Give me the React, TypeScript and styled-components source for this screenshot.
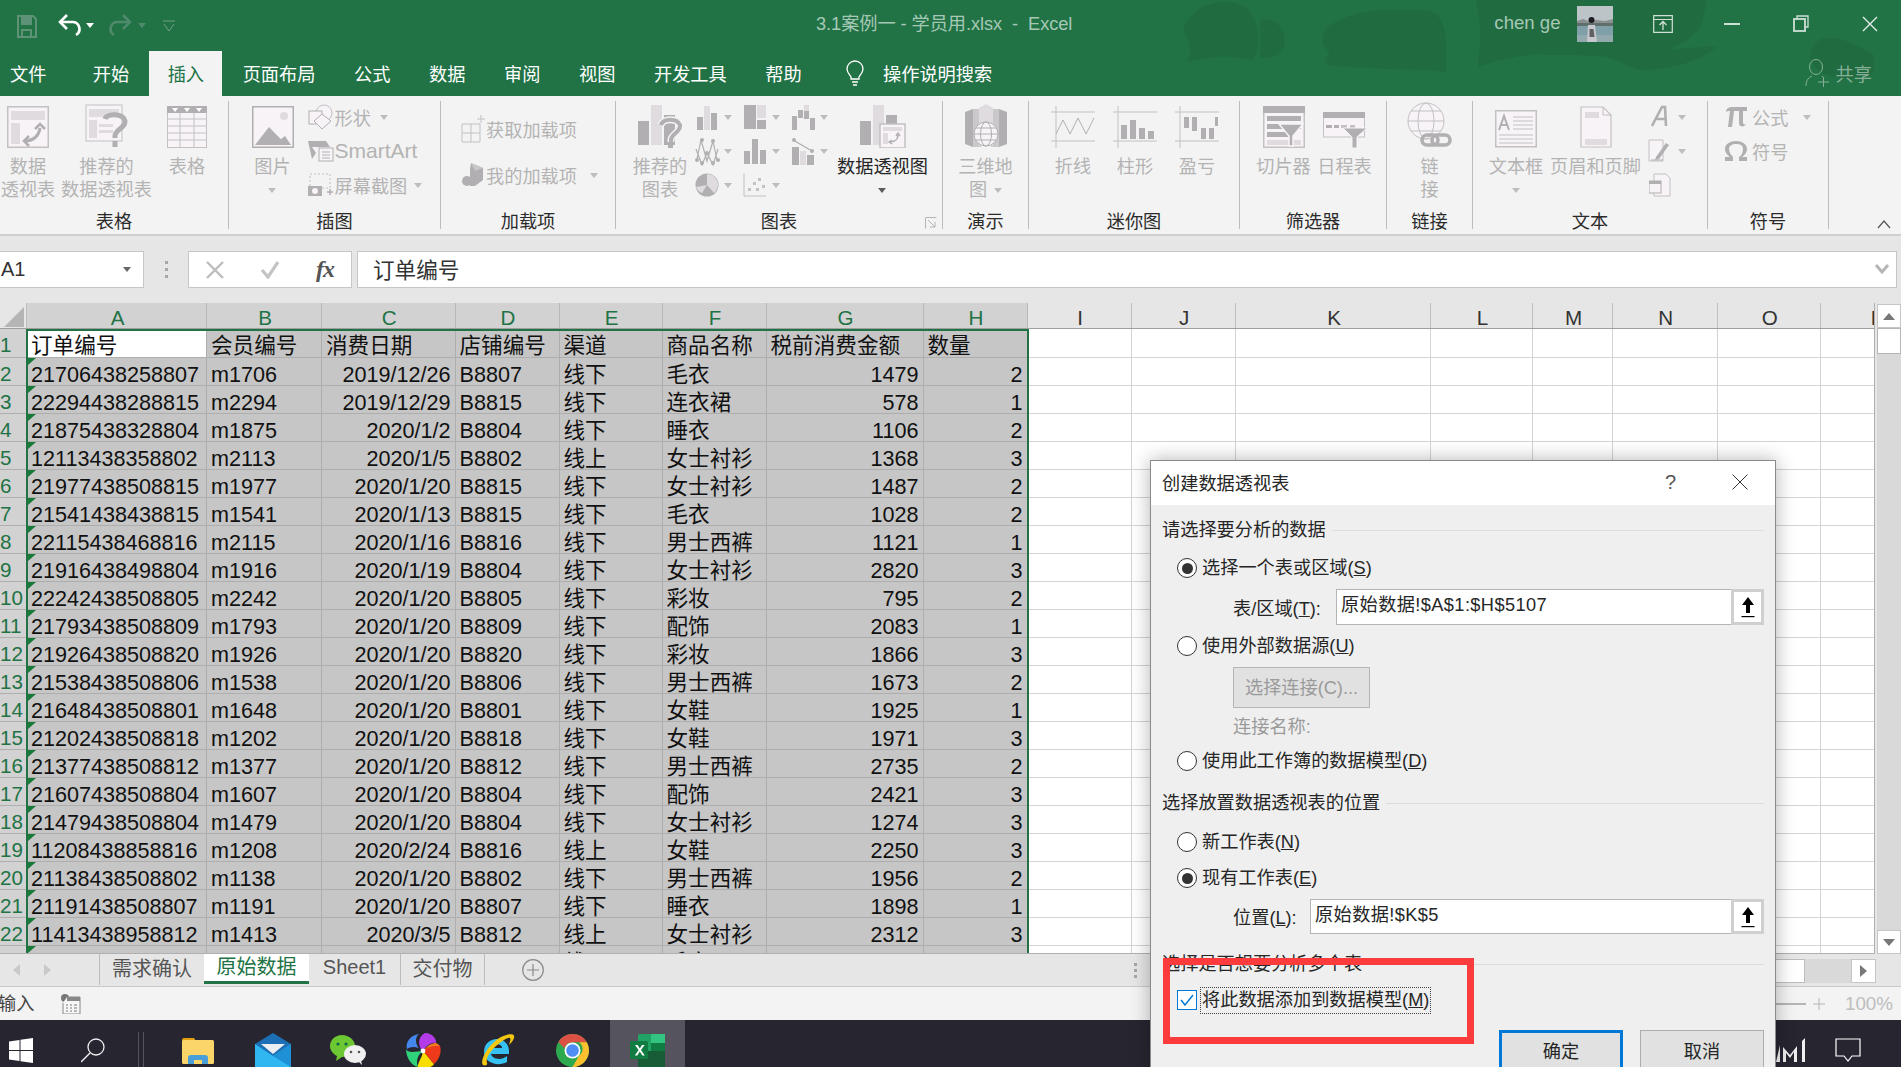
import React from "react";
import styled, { createGlobalStyle } from "styled-components";

const FONT = `"Liberation Sans","Noto Sans CJK SC",sans-serif`;
const D = "#b1afb1", L = "#dfdbdf", S = "#c3c1c3", P = "#f7f3f7";

const Global = createGlobalStyle`
  html, body { margin: 0; padding: 0; background: #fff; }
  * { box-sizing: border-box; }
  body { font-family: ${FONT}; }
`;

const Page = styled.div`
  width: 1901px; height: 1067px; position: relative; overflow: hidden;
  display: flex; flex-direction: column; font-size: 18.2px; color: #262626;
`;

/* ---------- header ---------- */
const Header = styled.header`
  height: 96px; background: #217346; position: relative; display: flex; flex-direction: column;
`;
const Clouds = styled.svg`position: absolute; left: 0; top: 0; pointer-events: none;`;
const TitleRow = styled.div`height: 51px; display: flex; align-items: center; position: relative;`;
const Qat = styled.div`width: 816px; display: flex; align-items: center; padding-left: 17px;`;
const QatItem = styled.span<{ $ml?: number }>`display: flex; margin-left: ${p => p.$ml ?? 0}px;`;
const Title = styled.div`color: #a6c8b5; white-space: pre; font-size: 18.2px; position: relative; top: -4px; letter-spacing: -.05px;`;
const Account = styled.div`margin-left: auto; display: flex; align-items: center; height: 51px; margin-right: -3px;`;
const UserName = styled.span`color: #a6c8b5; position: relative; top: -3px; margin-right: 16px; font-size: 18.6px;`;
const Avatar = styled.span`margin-right: 39px; position: relative; top: -2px; display: block;`;
const WinBtn = styled.span<{ $w: number; $ml?: number }>`
  width: ${p => p.$w}px; margin-left: ${p => p.$ml ?? 0}px; display: flex; justify-content: center; position: relative; top: -2px;
`;
const TabRow = styled.nav`height: 45px; display: flex; gap: 2px; position: relative; align-items: stretch;`;
const Tab = styled.div<{ $active?: boolean; $first?: boolean }>`
  padding: ${p => (p.$first ? "0 26px 0 10px" : "0 18.3px")};
  display: flex; align-items: center; padding-bottom: 1px;
  color: ${p => (p.$active ? "#217346" : "#fff")};
  background: ${p => (p.$active ? "#f3f3f3" : "transparent")};
`;
const TellMe = styled.div`display: flex; align-items: center; color: #fff; margin-left: 24px; gap: 19px; padding-bottom: 2px;`;
const Share = styled.div`margin-left: auto; display: flex; align-items: center; color: #85b097; gap: 7px; padding: 0 29px 2px 0;`;

/* ---------- ribbon ---------- */
const Ribbon = styled.section`
  height: 140px; background: #f3f3f3; border-bottom: 2px solid #cfcfcf;
  display: flex; padding: 5px 0 0; position: relative;
`;
const Group = styled.div<{ $w: number }>`
  width: ${p => p.$w}px; height: 128px; border-right: 1px solid #bdbdbd;
  display: flex; flex-direction: column; position: relative; flex: none;
`;
const GroupBody = styled.div`height: 110px; display: flex; align-items: flex-start;`;
const GroupLabel = styled.div`height: 18px; line-height: 22px; text-align: center; color: #2b2b2b;`;
const Launcher = styled.svg`position: absolute; right: 5px; bottom: 0;`;
const Big = styled.div<{ $w: number; $ml?: number }>`
  width: ${p => p.$w}px; margin-left: ${p => p.$ml ?? 0}px; flex: none;
  display: flex; flex-direction: column; align-items: center;
`;
const BigIcon = styled.div`height: 47px; display: flex; align-items: flex-end; justify-content: center;`;
const BigText = styled.div<{ $on?: boolean }>`
  margin-top: 8px; line-height: 23px; text-align: center; white-space: nowrap;
  color: ${p => (p.$on ? "#262626" : "#b3b3b3")};
`;
const TextLine = styled.div`display: flex; align-items: center; justify-content: center; height: 23px; gap: 7px;`;
const Caret = styled.span<{ $on?: boolean; $ml?: number }>`
  display: inline-block; width: 0; height: 0; flex: none; margin-left: ${p => p.$ml ?? 0}px;
  border-left: 4px solid transparent; border-right: 4px solid transparent;
  border-top: 5px solid ${p => (p.$on ? "#5c5c5c" : "#bdbdbd")};
`;
const Stack = styled.div<{ $ml?: number; $top?: number }>`
  margin-left: ${p => p.$ml ?? 0}px; margin-top: ${p => p.$top ?? -1}px;
  display: flex; flex-direction: column; flex: none;
`;
const SmallRow = styled.div<{ $h?: number }>`height: ${p => p.$h ?? 34}px; display: flex; align-items: center; color: #b3b3b3; white-space: nowrap;`;
const SmallIcon = styled.span`width: 27px; display: flex; justify-content: center; flex: none;`;
const SmallText = styled.span<{ $ml?: number; $size?: number }>`
  margin-left: ${p => p.$ml ?? 0}px; font-size: ${p => p.$size ?? 18.2}px;
`;
const ChartGrid = styled.div`
  width: 144px; margin-top: -1px; flex: none; display: grid;
  grid-template-columns: repeat(3, 48px); grid-auto-rows: 34px;
`;
const ChartCell = styled.div`display: flex; align-items: center;`;
const Collapse = styled.svg`position: absolute; right: 10px; bottom: 5px;`;

/* ---------- formula bar ---------- */
const FormulaBar = styled.div`
  height: 67px; background: #e6e6e6; padding: 15px 4px 0 0; display: flex; align-items: flex-start;
`;
const FieldBase = styled.div`height: 37px; background: #fff; border: 1px solid #c6c6c6; display: flex; align-items: center;`;
const NameBox = styled(FieldBase)`width: 145px; margin-left: -1px; padding: 0 12px 0 1px; justify-content: space-between; font-size: 20px; color: #333;`;
const Grip = styled.div`width: 44px; height: 37px; display: flex; flex-direction: column; align-items: center; justify-content: center; gap: 4px;`;
const GripDot = styled.i`width: 3px; height: 3px; background: #a6a6a6; display: block;`;
const FxBox = styled(FieldBase)`width: 164px; justify-content: space-between; padding: 0 17px 0 17px;`;
const FormulaInput = styled(FieldBase)`flex: 1; margin-left: 5px; padding: 0 6px 2px 15px; justify-content: space-between; font-size: 21.6px; color: #333;`;
const FxText = styled.span`font-family: "Liberation Serif", serif; font-style: italic; font-size: 24px; color: #555; font-weight: 700; letter-spacing: -1px;`;

/* ---------- sheet ---------- */
const COLS = [27, 180, 115, 133.5, 104, 103, 104, 157, 104, 104, 104.5, 195, 102, 80, 104.5, 103.5, 112];
const LETTERS = ["", "A", "B", "C", "D", "E", "F", "G", "H", "I", "J", "K", "L", "M", "N", "O", "P"];
const TEMPLATE = COLS.map(c => `${c}px`).join(" ");

const SheetArea = styled.div`height: 651px; display: flex; background: #e6e6e6;`;
const Grid = styled.div`
  width: 1875px; height: 651px; overflow: hidden; position: relative; background: #fff;
  border-right: 1px solid #b0b0b0; border-bottom: 1px solid #b0b0b0;
`;
const HeadRow = styled.div`display: grid; grid-template-columns: ${TEMPLATE}; height: 26px; border-bottom: 1px solid #9f9f9f;`;
const HeadCell = styled.div<{ $sel?: boolean }>`
  background: ${p => (p.$sel ? "#d2d2d2" : "#e6e6e6")};
  color: ${p => (p.$sel ? "#217346" : "#333")};
  border-right: 1px solid ${p => (p.$sel ? "#b9b9b9" : "#bfbfbf")};
  font-size: 20.6px; line-height: 30px; text-align: center; overflow: hidden; white-space: nowrap; padding-left: 2px;
`;
const Corner = styled.div`background: #e6e6e6; position: relative; border-right: 1px solid #bfbfbf;`;
const CornerMark = styled.svg`position: absolute; left: 4px; top: 4px;`;
const SheetRow = styled.div<{ $h: number }>`display: grid; grid-template-columns: ${TEMPLATE}; height: ${p => p.$h}px;`;
const RowHead = styled.div`
  background: #d2d2d2; color: #217346; font-size: 20.6px; line-height: 31px;
  border-bottom: 1px solid #aeaeae; overflow: hidden; white-space: nowrap;
`;
const Cell = styled.div<{ $sel?: boolean; $right?: boolean; $white?: boolean; $tri?: boolean }>`
  position: relative; overflow: hidden; white-space: nowrap;
  background: ${p => (p.$white ? "#fff" : p.$sel ? "#c6c6c6" : "#fff")};
  border-right: 1px solid ${p => (p.$sel ? "#aeaeae" : "#d4d4d4")};
  border-bottom: 1px solid ${p => (p.$sel ? "#aeaeae" : "#d4d4d4")};
  font-size: 21.6px; line-height: 33px; color: #111;
  padding: 0 4px; text-align: ${p => (p.$right ? "right" : "left")};
  ${p => p.$tri && `&::before { content: ""; position: absolute; left: 1px; top: 0; border-top: 7px solid #187a37; border-right: 8px solid transparent; }`}
`;
const Selection = styled.div`
  position: absolute; left: 26px; top: 26px; width: 1002.5px; height: 640px;
  border: 2px solid #217346; border-bottom: none; pointer-events: none;
`;
const VScroll = styled.aside`
  width: 26px; padding: 1px 0 0 2px; display: flex; flex-direction: column; background: #e6e6e6;
`;
const ScrollBtn = styled.div`height: 24px; background: #fff; border: 1px solid #c6c6c6; display: flex; align-items: center; justify-content: center; flex: none;`;
const VTrack = styled.div`flex: 1; background: #d9d9d9;`;
const VThumb = styled.div`height: 26px; background: #fff; border: 1px solid #b5b5b5;`;
const Tri = styled.svg`display: block;`;

/* ---------- tabs + status ---------- */
const SheetBar = styled.div`
  height: 33px; background: #e6e6e6; display: flex; align-items: flex-start; font-size: 20px; color: #555;
  border-bottom: 1px solid #c9c9c9;
`;
const NavBox = styled.div`width: 100px; height: 31px; display: flex; align-items: center; gap: 24px; padding-left: 13px; border-right: 1px solid #bcbcbc;`;
const SheetTab = styled.div<{ $active?: boolean; $w: number }>`
  width: ${p => p.$w}px; height: ${p => (p.$active ? 30 : 31)}px; display: flex; align-items: center; justify-content: center;
  padding-bottom: 5px; white-space: nowrap;
  background: ${p => (p.$active ? "#fff" : "transparent")};
  color: ${p => (p.$active ? "#217346" : "#555")};
  border-bottom: ${p => (p.$active ? "3px solid #217346" : "none")};
`;
const TabSep = styled.i`width: 1px; height: 31px; background: #bcbcbc; display: block; flex: none;`;
const AddSheet = styled.svg`margin: 5px 0 0 37px;`;
const HScroll = styled.div`margin-left: auto; display: flex; align-items: center; padding: 4px 25px 0 0; height: 29px;`;
const HDots = styled.div`width: 16px; display: flex; flex-direction: column; gap: 3px; align-items: flex-start;`;
const HTrack = styled.div`width: 701px; height: 24px; background: #d9d9d9;`;
const HThumb = styled.div`width: 655px; height: 24px; background: #fff; border: 1px solid #bdbdbd;`;
const HBtn = styled.div`width: 25px; height: 24px; background: #fff; border: 1px solid #c6c6c6; display: flex; align-items: center; justify-content: center;`;
const StatusBar = styled.div`height: 33px; background: #f3f3f3; display: flex; align-items: center; padding-right: 8px; color: #444; font-size: 18.2px;`;
const StatusText = styled.span`margin-right: 27px; margin-left: -2px; position: relative; top: -2px;`;
const Zoomer = styled.div`margin-left: auto; display: flex; align-items: center; color: #bdbdbd; font-size: 18.8px; gap: 7px;`;
const ZoomLine = styled.i`display: block; width: 32px; height: 2px; background: #b5b5b5;`;
const ZoomValue = styled.span`margin-left: 13px;`;

/* ---------- taskbar ---------- */
const Taskbar = styled.footer`height: 47px; background: #272530; display: flex; align-items: flex-end; flex: none;`;
const TaskSlot = styled.div<{ $w: number; $on?: boolean; $ml?: number; $pl?: number }>`
  width: ${p => p.$w}px; height: 47px; margin-left: ${p => p.$ml ?? 0}px; flex: none;
  padding: 13px 0 0 ${p => p.$pl ?? 0}px;
  display: flex; align-items: center; justify-content: center;
  background: ${p => (p.$on ? "#55535d" : "transparent")};
`;
const TaskSep = styled.div`width: 6px; height: 35px; border-left: 1px solid #55535d; border-right: 1px solid #55535d; flex: none;`;

/* ---------- dialog ---------- */
const Dialog = styled.div`
  position: absolute; left: 1150px; top: 460px; width: 626px; height: 607px; overflow: hidden;
  background: #efefef; border: 1px solid #8a8a8a; border-bottom: none; color: #262626;
  box-shadow: 0 0 18px rgba(0,0,0,.3); display: flex; flex-direction: column; z-index: 5;
`;
const DialogHead = styled.div`
  height: 44px; background: #fff; flex: none; display: flex; align-items: center; padding: 0 27px 2px 11px;
`;
const DialogTitle = styled.span`flex: 1;`;
const Help = styled.span`width: 67px; color: #555; font-size: 20px;`;
const DialogBody = styled.div`flex: 1; padding: 0 11px; display: flex; flex-direction: column; position: relative;`;
const Heading = styled.div<{ $mt: number }>`
  margin-top: ${p => p.$mt}px; height: 24px; line-height: 24px; display: flex; align-items: center; gap: 6px; flex: none;
  &::after { content: ""; flex: 1; height: 1px; background: #dcdcdc; }
`;
const OptRow = styled.div<{ $mt: number }>`
  margin-top: ${p => p.$mt}px; height: 24px; padding-left: 15px; display: flex; align-items: center; gap: 5px; flex: none; line-height: 24px;
`;
const Radio = styled.span<{ $on?: boolean }>`
  width: 20px; height: 20px; border-radius: 50%; border: 1.2px solid #333; background: #fff; flex: none;
  display: flex; align-items: center; justify-content: center;
  &::after { content: ""; width: 11px; height: 11px; border-radius: 50%; background: ${p => (p.$on ? "#333" : "transparent")}; }
`;
const FieldRow = styled.div<{ $mt: number; $h: number }>`
  margin-top: ${p => p.$mt}px; height: ${p => p.$h}px; padding-left: 71px; display: flex; align-items: center; flex: none;
`;
const FieldLabel = styled.span<{ $w: number }>`width: ${p => p.$w}px; flex: none; padding-bottom: 1px;`;
const RefInput = styled.div`
  flex: 1; height: 100%; background: #fff; border: 1px solid #b5b5b5; border-right: none; padding: 0 0 8px 4px;
  display: flex; align-items: center; letter-spacing: .4px;
`;
const RefBtn = styled.div`
  width: 33px; height: 100%; background: #fff; border: 3px solid #cfcfcf; flex: none;
  display: flex; align-items: center; justify-content: center;
`;
const Indent = styled.div<{ $mt: number; $h: number }>`
  margin-top: ${p => p.$mt}px; height: ${p => p.$h}px; margin-left: 71px; color: #9a9a9a; line-height: ${p => p.$h}px; flex: none;
`;
const GhostBtn = styled.div`
  margin-top: 9px; margin-left: 71px; width: 137px; height: 41px; background: #e1e1e1; border: 1px solid #b5b5b5; color: #9a9a9a;
  padding-bottom: 3px; display: flex; align-items: center; justify-content: center; flex: none; white-space: nowrap;
`;
const CheckBox = styled.span`
  width: 20px; height: 20px; background: #fff; border: 1.5px solid #0078d7; flex: none; display: flex; align-items: center; justify-content: center;
`;
const FocusLabel = styled.span`height: 27px; padding: 0 1px; margin-left: -2px; border: 1px dotted #444; display: block; line-height: 25px;`;
const ButtonRow = styled.div`margin-top: 18px; display: flex; justify-content: flex-end; gap: 17px; flex: none;`;
const DlgBtn = styled.div<{ $primary?: boolean }>`
  width: 124px; height: 50px; background: #e1e1e1; display: flex; align-items: flex-start; justify-content: center;
  padding-top: ${p => (p.$primary ? 4 : 6)}px;
  border: ${p => (p.$primary ? "3px solid #0078d7" : "1px solid #adadad")}; border-bottom: none;
`;
const RedBox = styled.div`
  position: absolute; left: 12px; top: 453px; width: 311px; height: 86px; border: 7px solid #fb3b3c; pointer-events: none;
`;

/* ---------- drawings ---------- */
const Svg = styled.svg`display: block; flex: none;`;
const I = ({ w, h, children }: { w: number; h: number; children: React.ReactNode }) => (
  <Svg width={w} height={h} viewBox={`0 0 ${w} ${h}`}>{children}</Svg>
);

const SaveIc = () => (
  <I w={20} h={24}><path d="M1 2h15l3 3v18H1z" fill="none" stroke="#5e9277" strokeWidth="2" /><rect x="4" y="3" width="11" height="8" fill="#5e9277" /><rect x="5" y="16" width="9" height="7" fill="none" stroke="#5e9277" strokeWidth="2" /></I>
);
const UndoIc = ({ c }: { c: string }) => (
  <I w={24} h={24}><path d="M3 8h11a7 7 0 0 1 4 13" fill="none" stroke={c} strokeWidth="2.6" /><path d="M9 1 2 8l7 7" fill="none" stroke={c} strokeWidth="2.6" /></I>
);
const RedoIc = () => (
  <I w={24} h={24}><path d="M21 8H10a7 7 0 0 0-4 13" fill="none" stroke="#4f8a6c" strokeWidth="2.6" /><path d="m15 1 7 7-7 7" fill="none" stroke="#4f8a6c" strokeWidth="2.6" /></I>
);
const SmallDown = ({ c }: { c: string }) => <I w={8} h={5}><path d="M0 0h8L4 5z" fill={c} /></I>;
const CustomizeIc = () => (
  <I w={12} h={12}><path d="M0 1h12M1 4l5 7 5-7" fill="none" stroke="#6f9f85" strokeWidth="1" /></I>
);

const PivotTable = () => (
  <I w={42} h={42}><rect x=".75" y=".75" width="40.5" height="40.5" fill={P} stroke={S} strokeWidth="1.5" /><rect x="4" y="5" width="34" height="9" fill={L} /><rect x="4" y="17" width="9" height="21" fill={L} /><path d="M18 35c8 0 14-5 15-13" fill="none" stroke={D} strokeWidth="3" /><path d="m28 23 5-5 5 5M22 30l-5 5 5 5" fill="none" stroke={D} strokeWidth="2.6" /></I>
);
const RecommendPivot = () => (
  <I w={44} h={44}><rect x="1" y="1" width="36" height="36" fill={P} stroke={S} /><rect x="4" y="5" width="30" height="8" fill={L} /><rect x="4" y="16" width="8" height="18" fill={L} /><rect x="14" y="20" width="14" height="3" fill={L} /><rect x="14" y="26" width="14" height="3" fill={L} /><path d="M20 15c2-6 18-6 20 2 1 7-10 8-10 15v2" fill="none" stroke={D} strokeWidth="5" /><rect x="27.5" y="37" width="5" height="6" fill={D} /></I>
);
const TableIc = () => (
  <I w={40} h={42}><rect x=".5" y=".5" width="39" height="41" fill={P} stroke={S} /><rect x="0" y="0" width="40" height="7" fill={D} /><path d="M5 2h6l-3 4zM17 2h6l-3 4zM29 2h6l-3 4z" fill="#fff" /><path d="M0 13h40M0 20h40M0 27h40M0 34h40M13 7v35M27 7v35" stroke={S} /></I>
);
const PictureIc = () => (
  <I w={42} h={42}><rect x=".75" y=".75" width="40.5" height="40.5" fill={P} stroke={D} strokeWidth="1.5" /><circle cx="32" cy="10" r="4" fill={L} /><path d="M3 39 17 21l12 12 4-3 6 9z" fill={D} /><path d="m21 25 8 8 3-3-6-6z" fill={P} /></I>
);
const ShapesIc = () => (
  <I w={26} h={26}><circle cx="16" cy="9" r="8" fill={P} stroke={S} /><rect x="1" y="7" width="13" height="13" fill={P} stroke={D} /><path d="m14 10 9 7-9 8-8-8z" fill={P} stroke={D} /></I>
);
const SmartArtIc = () => (
  <I w={26} h={22}><path d="M0 1h18l4 6h-18l4 6-4 6" fill={D} /><rect x="11" y="8" width="14" height="13" fill={P} stroke={D} /><path d="M14 12h8M14 15h8M14 18h8" stroke={D} /></I>
);
const ScreenshotIc = () => (
  <I w={26} h={24}><rect x="2" y="1" width="20" height="14" fill="none" stroke={S} strokeDasharray="2 2" /><rect x="0" y="13" width="14" height="10" fill={D} /><circle cx="7" cy="18" r="3" fill={P} /><path d="M19 19h6M22 16v6" stroke={D} strokeWidth="1.5" /></I>
);
const AddinIc = () => (
  <I w={24} h={28}><path d="M1 9h18v18H1zM10 9v18M1 18h18" fill="none" stroke={S} /><path d="M16 4h8M20 0v8" stroke={S} /></I>
);
const StoreIc = () => (
  <I w={22} h={24}><path d="m9 0 12 5v12l-8 6H8V6z" fill={D} /><path d="M9 0 21 5 13 8z" fill="#c8c6c8" /><circle cx="5" cy="18" r="5" fill={D} /></I>
);
const BarSm = () => (<I w={22} h={26}><rect x="1" y="13" width="6" height="13" fill={D} /><rect x="8" y="2" width="6" height="24" fill={L} /><rect x="15" y="9" width="6" height="17" fill={D} /></I>);
const TreeSm = () => (<I w={24} h={26}><rect x="1" y="1" width="12" height="24" fill={D} /><rect x="14" y="1" width="9" height="13" fill={L} /><rect x="14" y="16" width="9" height="9" fill={D} /></I>);
const WaterSm = () => (<I w={24} h={26}><path d="M1 12h5v14H1zM7 6h5v8H7zM13 1h5v14h-5z" fill={D} /><path d="M13 1h5v6h-5z" fill={L} /><path d="M19 14h5v12h-5z" fill={D} /></I>);
const LineSm = () => (<I w={26} h={30}><path d="M3 23 7 4l6 21L19 5l4 19M2 13l6 16 5-12 6 12 5-16" fill="none" stroke={D} strokeWidth="1.2" /><g fill={D}><circle cx="8" cy="4" r="2" /><circle cx="19" cy="5" r="2" /><circle cx="3" cy="24" r="2" /><circle cx="13" cy="17" r="2" /><circle cx="24" cy="24" r="2" /><circle cx="8" cy="27" r="2" /><circle cx="19" cy="27" r="2" /></g></I>);
const StatSm = () => (<I w={24} h={26}><path d="M1 13h6v13H1zM9 1h6v25H9zM17 12h6v14h-6z" fill={D} /></I>);
const ComboSm = () => (<I w={22} h={28}><path d="M1 3l19 11" stroke={D} strokeWidth="1.4" /><circle cx="2" cy="3" r="2" fill={D} /><circle cx="20" cy="14" r="2" fill={D} /><path d="M0 10h7v18H0z" fill={D} /><path d="M8 14h6v14H8z" fill={L} /><path d="M15 18h7v10h-7z" fill={D} /></I>);
const PieSm = () => (<I w={24} h={24}><circle cx="12" cy="12" r="11.5" fill={D} /><path d="M12 12V1a11 11 0 0 1 11 11 11 11 0 0 1-4 8z" fill={L} /><path d="M12 12 1 14a11 11 0 0 0 6 6z" fill={L} /></I>);
const ScatterSm = () => (<I w={24} h={24}><path d="M1 0v23h22" fill="none" stroke={S} /><g fill={S}><rect x="5" y="15" width="3" height="3" /><rect x="10" y="9" width="3" height="3" /><rect x="15" y="5" width="3" height="3" /><rect x="13" y="15" width="3" height="3" /><rect x="19" y="12" width="3" height="3" /></g></I>);
const RecChart = () => (
  <I w={44} h={44}><rect x="0" y="17" width="11" height="24" fill={D} /><rect x="13" y="1" width="11" height="40" fill={L} /><rect x="26" y="11" width="11" height="30" fill={D} /><path d="M23 21c2-7 16-7 19 0 1 7-9 9-9 15v2" fill="none" stroke="#f3f3f3" strokeWidth="7" /><path d="M23 21c2-7 16-7 19 0 1 7-9 9-9 15v2" fill="none" stroke={D} strokeWidth="4" /><rect x="30" y="38" width="5" height="6" fill={D} /></I>
);
const PivotChart = () => (
  <I w={46} h={44}><rect x="0" y="17" width="11" height="24" fill={D} /><rect x="13" y="1" width="11" height="40" fill={L} /><rect x="26" y="11" width="11" height="30" fill={D} /><rect x="20" y="20" width="25" height="24" fill={P} stroke={S} strokeWidth="1.5" /><rect x="23" y="23" width="19" height="4" fill={L} /><rect x="23" y="29" width="5" height="11" fill={L} /><path d="M30 38c5 0 8-3 8-7" fill="none" stroke={D} strokeWidth="1.6" /><path d="m36 32 2-3 2 3M32 36l-3 2 3 2" fill="none" stroke={D} strokeWidth="1.4" /></I>
);
const Map3D = () => (
  <I w={42} h={44}><path d="M0 8 8 5v38l-8-3zM34 5l8 3v32l-8 3z" fill={D} /><path d="M8 5h8v38H8zM26 5h8v38h-8z" fill="#cbc8cb" /><path d="M14 4l7-4 7 4v38H14z" fill={L} /><circle cx="21" cy="30" r="12" fill={P} stroke={D} /><ellipse cx="21" cy="30" rx="5.5" ry="12" fill="none" stroke={D} /><path d="M9 30h24M11 24h20M11 36h20" stroke={D} /></I>
);
const SparkLine = () => (
  <I w={44} h={42}><path d="M5 0v42M0 6h44M0 35h44" stroke={S} /><path d="M5 28 12 14l7 14 8-16 8 16 8-16" fill="none" stroke={D} /></I>
);
const SparkCol = () => (
  <I w={44} h={42}><path d="M5 0v42M0 6h44M0 35h44" stroke={S} /><path d="M8 19h6v14H8zM17 14h6v19h-6zM26 22h6v11h-6zM35 25h6v8h-6z" fill={D} /></I>
);
const SparkWin = () => (
  <I w={44} h={42}><path d="M5 0v42M0 6h44M0 35h44" stroke={S} /><path d="M9 11h5v11H9zM17 11h5v14h-5zM26 22h5v11h-5zM34 22h5v11h-5zM40 11h3v9h-3z" fill={D} /></I>
);
const SlicerIc = () => (
  <I w={42} h={42}><rect x=".75" y=".75" width="40.5" height="40.5" fill={P} stroke={S} strokeWidth="1.5" /><rect x="0" y="0" width="42" height="7" fill={D} /><rect x="4" y="10" width="34" height="5" fill={D} /><rect x="4" y="18" width="34" height="5" fill={D} /><rect x="4" y="26" width="26" height="5" fill={D} /><rect x="4" y="34" width="34" height="5" fill={L} /><path d="M16 18h24L30 30v10h-4V30z" fill={D} stroke={P} strokeWidth="1.5" /></I>
);
const TimelineIc = () => (
  <I w={44} h={36}><rect x=".5" y="1" width="41" height="24" fill={P} stroke={S} /><rect x="0" y="0" width="42" height="6" fill={D} /><path d="M3 13h6v3H3zM11 13h5v3h-5z" fill={D} /><path d="M18 13h6v3h-6zM27 13h5v3h-5z" fill={S} /><path d="M20 16h24L34 25v11h-5V25z" fill={D} stroke={P} /></I>
);
const LinkIc = () => (
  <I w={46} h={46}><circle cx="19" cy="19" r="18" fill={P} stroke={S} /><ellipse cx="19" cy="19" rx="8" ry="18" fill="none" stroke={S} /><path d="M1 19h36M4 9h30M4 29h30" stroke={S} /><rect x="15" y="33" width="16" height="10" rx="5" fill="none" stroke={D} strokeWidth="3.6" /><rect x="25" y="33" width="18" height="10" rx="5" fill="none" stroke={D} strokeWidth="3.6" /></I>
);
const TextBoxIc = () => (
  <I w={42} h={38}><rect x=".75" y=".75" width="40.5" height="36" fill={P} stroke={S} strokeWidth="1.5" /><path d="M4 20 9 6l5 14M6 15h6" fill="none" stroke={D} strokeWidth="2" /><path d="M18 7h20M18 11h20M18 15h20M18 19h20M4 25h34M4 29h34M4 33h34" stroke={S} /></I>
);
const HeaderFooterIc = () => (
  <I w={32} h={42}><path d="M1 1h22l8 8v32H1z" fill={P} stroke={S} strokeWidth="1.2" /><path d="M23 1v8h8" fill="none" stroke={S} /><rect x="5" y="6" width="14" height="6" fill={L} /><rect x="5" y="33" width="22" height="6" fill={L} /></I>
);
const WordArtIc = () => (
  <I w={18} h={24}><path d="M1 21 11 2h3l1 19M5 14h10" fill="none" stroke={D} strokeWidth="2.6" /></I>
);
const SignIc = () => (
  <I w={24} h={24}><path d="M1 1h13l1 0v21H1z" fill={P} stroke={S} /><path d="m8 18 10-14 3 2-10 14-4 1z" fill={D} /><path d="M3 21h12" stroke={D} /></I>
);
const ObjectIc = () => (
  <I w={22} h={24}><path d="M5 1h12l4 4v18H5z" fill={P} stroke={S} /><rect x="0" y="8" width="12" height="12" fill={P} stroke={D} /><rect x="0" y="8" width="12" height="3" fill={D} /></I>
);
const PiIc = () => (
  <I w={22} h={22}><path d="M1 5c1-3 3-4 6-4h15v4h-4v11c0 2 1 3 3 2-1 3-7 4-7-1V5H9l-2 16H3L5 5c-2 0-3 0-4 1z" fill={D} /></I>
);
const OmegaIc = () => (
  <I w={24} h={22}><path d="M4 21H1v-4h5C2 14 1 11 1 9c0-5 5-8 11-8s11 3 11 8c0 2-1 5-5 8h5v4h-8v-4c2-1 4-4 4-8s-3-5-7-5-7 2-7 5 2 6 4 8v4z" fill={D} /></I>
);
const BulbIc = () => (
  <I w={18} h={26}><path d="M5 17C3 14 1 12 1 9a8 8 0 0 1 16 0c0 3-2 5-4 8v2H5z" fill="none" stroke="#fff" strokeWidth="1.3" /><path d="M6 22h6M7 25h4" stroke="#fff" strokeWidth="1.6" /></I>
);
const PersonIc = () => (
  <I w={24} h={28}><ellipse cx="11" cy="8" rx="6.5" ry="7.5" fill="none" stroke="#85b097" /><path d="M1 27c0-6 3-9 6-10M17 17l2 2" fill="none" stroke="#85b097" /><path d="M13 23h11M18.5 18v10" stroke="#85b097" /></I>
);
const AvatarPhoto = () => (
  <I w={36} h={36}><rect width="36" height="36" fill="#bcc4c7" /><rect y="15" width="36" height="5" fill="#5f6f6c" /><path d="M0 15l6-2 5 2 8-1 9 1 8-2v4H0z" fill="#8a8f90" /><rect y="20" width="36" height="16" fill="#7f9fa9" /><rect y="29" width="36" height="7" fill="#92a9ae" /><circle cx="14.500" cy="14" r="3" fill="#1d1c1f" /><path d="M11 19h7l2 17h-10z" fill="#c8c8cc" /><path d="M12.500 23h4l1 8h-5z" fill="#5f5f64" /></I>
);

const WinLogo = () => (<I w={24} h={25}><path d="M0 3.5 10.5 2v10H0zM11.5 1.800 24 0v12H11.500zM0 13h10.500v10L0 21.500zM11.500 13H24v12l-12.500-1.800z" fill="#fff" /></I>);
const SearchIc = () => (<I w={24} h={25}><circle cx="15" cy="9" r="8" fill="none" stroke="#f0f0f0" strokeWidth="1.3" /><path d="m9 15-9 9" stroke="#f0f0f0" strokeWidth="1.5" /></I>);
const ExplorerIc = () => (<I w={32} h={27}><path d="M0 3q0-2 2-2h10l2 3h-14z" fill="#e0a00f" /><rect y="3" width="32" height="24" rx="1.5" fill="#fbd56a" /><path d="M6 27v-6q0-3 3-3h14q3 0 3 3v6h-6v-4h-8v4z" fill="#4b9fd8" /></I>);
const MailIc = () => (<I w={36} h={34}><path d="M0 11 18 0l18 11v23H0z" fill="#1c6fb5" /><path d="M6 11h24L18 21z" fill="#eceff2" /><path d="M0 11v23h36V11L18 23z" fill="#30b6f0" /><path d="M18 23l18-12v23z" fill="#1f8fd6" /></I>);
const WeChatIc = () => (<I w={36} h={30}><path d="M12 0c7 0 13 5 13 11s-5 11-13 11l-6 4 1-5C3 19 0 15 0 11 0 5 5 0 12 0z" fill="#6dc733" /><circle cx="8" cy="9" r="1.6" fill="#164" /><circle cx="16" cy="9" r="1.6" fill="#164" /><ellipse cx="25" cy="19" rx="11" ry="9" fill="#f0f0f0" /><circle cx="21" cy="17" r="1.3" fill="#555" /><circle cx="29" cy="17" r="1.3" fill="#555" /><path d="m28 26 4 4-1-5z" fill="#f0f0f0" /></I>);
const PinwheelIc = () => (<I w={36} h={35}><path d="M18 18C13 14 12 4 20 0c8 0 12 7 11 10-3-1-9 1-13 8z" fill="#b33be8" /><path d="M18 18C12 16 8 6 14 1 6 2 0 9 2 16c4-3 11-3 16 2z" fill="#4488ee" /><path d="M18 18c-6 0-15 3-17-2 0 9 6 17 12 18-2-5-1-12 5-16z" fill="#2fd27a" /><path d="M18 18c0 5-6 13-5 16 5 2 14 1 16-3-3-3-6-8-11-13z" fill="#f7dd00" /><path d="M18 18c4 4 7 9 11 13 5-4 8-12 6-18-5 0-12-1-17 5z" fill="#ee3a1a" /><path d="M18 18c5-6 9-8 13-8 2 1 3 2 4 3-6 0-12 0-17 5z" fill="#f47a20" /><circle cx="18" cy="18" r="2.4" fill="#fff" /></I>);
const IeIc = () => (<I w={34} h={34}><path d="M3 19c0-8 6-13 13-13s12 5 12 12v3H10c1 5 10 7 16 2v6c-9 5-23 1-23-10z" fill="#35c1f1" /><path d="M10 15h11c0-5-10-5-11 0z" fill="#272530" /><path d="M2 32C-2 28 8 10 20 4c6-3 13-4 13-1 1 2-2 6-5 9 1-4 2-6 1-7-3-2-26 15-23 25 1 2-2 3-4 2z" fill="#f2c811" /></I>);
const ChromeIc = () => (<I w={33} h={33}><circle cx="16.5" cy="16.5" r="16.5" fill="#2da94f" /><path d="M16.5 0a16.5 16.5 0 0 1 14.3 8.3H16.5a8.3 8.3 0 0 0-8 6L2.4 8A16.5 16.5 0 0 1 16.5 0z" fill="#dd5144" /><path d="M30.8 8.3a16.5 16.5 0 0 1-14.3 24.7l6.6-11.5a8 8 0 0 0 0-13.2z" fill="#fbc02d" /><circle cx="16.5" cy="16.5" r="8" fill="#fff" /><circle cx="16.5" cy="16.5" r="6.3" fill="#4f8ef5" /></I>);
const ExcelIc = () => (<I w={36} h={33}><rect x="8" y="0" width="27" height="33" rx="1.5" fill="#21a366" /><rect x="21" y="0" width="14" height="9" fill="#33c481" /><rect x="8" y="8" width="13" height="9" fill="#21a366" /><rect x="21" y="9" width="14" height="8" fill="#107c41" /><rect x="8" y="17" width="27" height="16" fill="#185c37" /><rect x="0" y="7" width="18" height="18" rx="1.5" fill="#107c41" /><path d="m5 11 3.6 5-3.8 5.4h2.5l2.5-3.8 2.5 3.8h2.500L11 16l3.600-5H12l-2.200 3.400L7.600 11z" fill="#fff" /></I>);
const MLogo = () => (<I w={30} h={25}><path d="M0 24 4 7v17zM7 24V9l7 8 7-9v16h-3V14l-4 6-4-5v9zM26 24V3l3-3v24z" fill="#eee" /></I>);
const NotifyIc = () => (<I w={26} h={24}><path d="M1 1h24v17H17l-4 5-4-5H1z" fill="none" stroke="#fff" strokeWidth="1.2" /></I>);
const ArrowUpIc = () => (<I w={16} h={22}><path d="M8 1 14 9h-4v8H6V9H2z" fill="#000" /><rect x="1.500" y="20" width="13" height="1.2" fill="#000" /></I>);

/* ---------- data ---------- */
const HEAD = ["订单编号", "会员编号", "消费日期", "店铺编号", "渠道", "商品名称", "税前消费金额", "数量"];
const DATA: string[][] = [
  ["21706438258807", "m1706", "2019/12/26", "B8807", "线下", "毛衣", "1479", "2"],
  ["22294438288815", "m2294", "2019/12/29", "B8815", "线下", "连衣裙", "578", "1"],
  ["21875438328804", "m1875", "2020/1/2", "B8804", "线下", "睡衣", "1106", "2"],
  ["12113438358802", "m2113", "2020/1/5", "B8802", "线上", "女士衬衫", "1368", "3"],
  ["21977438508815", "m1977", "2020/1/20", "B8815", "线下", "女士衬衫", "1487", "2"],
  ["21541438438815", "m1541", "2020/1/13", "B8815", "线下", "毛衣", "1028", "2"],
  ["22115438468816", "m2115", "2020/1/16", "B8816", "线下", "男士西裤", "1121", "1"],
  ["21916438498804", "m1916", "2020/1/19", "B8804", "线下", "女士衬衫", "2820", "3"],
  ["22242438508805", "m2242", "2020/1/20", "B8805", "线下", "彩妆", "795", "2"],
  ["21793438508809", "m1793", "2020/1/20", "B8809", "线下", "配饰", "2083", "1"],
  ["21926438508820", "m1926", "2020/1/20", "B8820", "线下", "彩妆", "1866", "3"],
  ["21538438508806", "m1538", "2020/1/20", "B8806", "线下", "男士西裤", "1673", "2"],
  ["21648438508801", "m1648", "2020/1/20", "B8801", "线下", "女鞋", "1925", "1"],
  ["21202438508818", "m1202", "2020/1/20", "B8818", "线下", "女鞋", "1971", "3"],
  ["21377438508812", "m1377", "2020/1/20", "B8812", "线下", "男士西裤", "2735", "2"],
  ["21607438508804", "m1607", "2020/1/20", "B8804", "线下", "配饰", "2421", "3"],
  ["21479438508804", "m1479", "2020/1/20", "B8804", "线下", "女士衬衫", "1274", "3"],
  ["11208438858816", "m1208", "2020/2/24", "B8816", "线上", "女鞋", "2250", "3"],
  ["21138438508802", "m1138", "2020/1/20", "B8802", "线下", "男士西裤", "1956", "2"],
  ["21191438508807", "m1191", "2020/1/20", "B8807", "线下", "睡衣", "1898", "1"],
  ["11413438958812", "m1413", "2020/3/5", "B8812", "线上", "女士衬衫", "2312", "3"],
  ["", "", "", "", "线下", "毛衣", "", ""],
];
const RIGHT = new Set([2, 6, 7]);

const BigBtn = ({ w, ml, icon, lines, on, caret }: { w: number; ml?: number; icon: React.ReactNode; lines: string[]; on?: boolean; caret?: "below" | "inline" }) => (
  <Big $w={w} $ml={ml}>
    <BigIcon>{icon}</BigIcon>
    <BigText $on={on}>
      {lines.map((l, i) => (
        <TextLine key={i}>{l}{caret === "inline" && i === lines.length - 1 && <Caret />}</TextLine>
      ))}
      {caret === "below" && <TextLine><Caret $on={on} /></TextLine>}
    </BigText>
  </Big>
);

const Chart = ({ icon }: { icon: React.ReactNode }) => (
  <ChartCell><SmallIcon>{icon}</SmallIcon><Caret $ml={4} /></ChartCell>
);

export default function App() {
  return (
    <Page>
      <Global />
      <Header>
        <Clouds width="1901" height="96" viewBox="0 0 1901 96">
          <g fill="#216b41">
            <path d="M1183 30c10-30 50-35 65-20 12 12 14 35 5 50-25-6-50-2-66 2 6-12 2-22-4-32z" />
            <path d="M1260 20c14-4 24 8 25 20 0 12-10 20-25 18z" />
            <path d="M1325 30c14-14 42-20 60-20h40c18 2 21 20 21 34v28c-30-4-70-2-110-6-12 0-14-6-6-12-8-8-10-16-5-24z" />
            <path d="M1476 0c2 14 6 28 4 43l-2 24c24-8 46-14 68-12 24 0 44 0 61 2 16 6 28 14 41 13 26-2 50-8 69-23-16-2-32 2-49 3 16-8 32-16 35-30l4-20z" />
            <path d="M1811 60c-2-14 8-24 20-22 14 0 30 10 42 16 4 14 2 24-14 24-16 2-44-2-48-18z" />
          </g>
        </Clouds>
        <TitleRow>
          <Qat>
            <SaveIc />
            <QatItem $ml={21}><UndoIc c="#fff" /></QatItem>
            <QatItem $ml={4}><SmallDown c="#fff" /></QatItem>
            <QatItem $ml={14}><RedoIc /></QatItem>
            <QatItem $ml={6}><SmallDown c="#4f8a6c" /></QatItem>
            <QatItem $ml={17}><CustomizeIc /></QatItem>
          </Qat>
          <Title>3.1案例一 - 学员用.xlsx  -  Excel</Title>
          <Account>
            <UserName>chen ge</UserName>
            <Avatar><AvatarPhoto /></Avatar>
            <WinBtn $w={22}><I w={20} h={18}><path d="M.7.7h18.6v16.600H.7zM0 4.500h20" fill="none" stroke="#cfe0d6" strokeWidth="1.200" /><path d="M10 15V7M6.500 10 10 6.500l3.500 3.500" fill="none" stroke="#cfe0d6" strokeWidth="1.300" /></I></WinBtn>
            <WinBtn $w={69} $ml={23.500}><I w={16} h={2}><rect width="16" height="2" fill="#cfe0d6" /></I></WinBtn>
            <WinBtn $w={69}><I w={16} h={17}><path d="M4 4V1h11v11h-3" fill="none" stroke="#cfe0d6" strokeWidth="1.300" /><rect x="1" y="4" width="11" height="12" fill="none" stroke="#cfe0d6" strokeWidth="1.800" /></I></WinBtn>
            <WinBtn $w={69}><I w={16} h={16}><path d="m1 1 14 14M15 1 1 15" stroke="#e3eee8" strokeWidth="1.400" /></I></WinBtn>
          </Account>
        </TitleRow>
        <TabRow>
          <Tab $first>文件</Tab>
          <Tab>开始</Tab>
          <Tab $active>插入</Tab>
          <Tab>页面布局</Tab>
          <Tab>公式</Tab>
          <Tab>数据</Tab>
          <Tab>审阅</Tab>
          <Tab>视图</Tab>
          <Tab>开发工具</Tab>
          <Tab>帮助</Tab>
          <TellMe><BulbIc />操作说明搜索</TellMe>
          <Share><PersonIc />共享</Share>
        </TabRow>
      </Header>

      <Ribbon>
        <Group $w={229}>
          <GroupBody>
            <BigBtn w={56} icon={<PivotTable />} lines={["数据", "透视表"]} />
            <BigBtn w={91} ml={5} icon={<RecommendPivot />} lines={["推荐的", "数据透视表"]} />
            <BigBtn w={70} icon={<TableIc />} lines={["表格"]} />
          </GroupBody>
          <GroupLabel>表格</GroupLabel>
        </Group>
        <Group $w={212}>
          <GroupBody>
            <BigBtn w={60} ml={13.500} icon={<PictureIc />} lines={["图片"]} caret="below" />
            <Stack $ml={5}>
              <SmallRow><SmallIcon><ShapesIc /></SmallIcon><SmallText>形状</SmallText><Caret $ml={9} /></SmallRow>
              <SmallRow><SmallIcon><SmartArtIc /></SmallIcon><SmallText $size={21}>SmartArt</SmallText></SmallRow>
              <SmallRow><SmallIcon><ScreenshotIc /></SmallIcon><SmallText>屏幕截图</SmallText><Caret $ml={7} /></SmallRow>
            </Stack>
          </GroupBody>
          <GroupLabel>插图</GroupLabel>
        </Group>
        <Group $w={175}>
          <GroupBody>
            <Stack $ml={18} $top={5}>
              <SmallRow $h={46}><SmallIcon><AddinIc /></SmallIcon><SmallText>获取加载项</SmallText></SmallRow>
              <SmallRow $h={46}><SmallIcon><StoreIc /></SmallIcon><SmallText>我的加载项</SmallText><Caret $ml={13} /></SmallRow>
            </Stack>
          </GroupBody>
          <GroupLabel>加载项</GroupLabel>
        </Group>
        <Group $w={327}>
          <GroupBody>
            <BigBtn w={66} ml={11} icon={<RecChart />} lines={["推荐的", "图表"]} />
            <ChartGrid>
              <Chart icon={<BarSm />} /><Chart icon={<TreeSm />} /><Chart icon={<WaterSm />} />
              <Chart icon={<LineSm />} /><Chart icon={<StatSm />} /><Chart icon={<ComboSm />} />
              <Chart icon={<PieSm />} /><Chart icon={<ScatterSm />} />
            </ChartGrid>
            <BigBtn w={91} on icon={<PivotChart />} lines={["数据透视图"]} caret="below" />
          </GroupBody>
          <GroupLabel>图表</GroupLabel>
          <Launcher width="12" height="12" viewBox="0 0 12 12"><path d="M.5 11.500V.5h11M3 3l7 7M5 10h5V5" fill="none" stroke="#b5b5b5" /></Launcher>
        </Group>
        <Group $w={86}>
          <GroupBody><BigBtn w={85} icon={<Map3D />} lines={["三维地", "图"]} caret="inline" /></GroupBody>
          <GroupLabel>演示</GroupLabel>
        </Group>
        <Group $w={211}>
          <GroupBody>
            <BigBtn w={62} ml={13} icon={<SparkLine />} lines={["折线"]} />
            <BigBtn w={62} icon={<SparkCol />} lines={["柱形"]} />
            <BigBtn w={62} icon={<SparkWin />} lines={["盈亏"]} />
          </GroupBody>
          <GroupLabel>迷你图</GroupLabel>
        </Group>
        <Group $w={147}>
          <GroupBody>
            <BigBtn w={61} ml={13} icon={<SlicerIc />} lines={["切片器"]} />
            <BigBtn w={61} icon={<TimelineIc />} lines={["日程表"]} />
          </GroupBody>
          <GroupLabel>筛选器</GroupLabel>
        </Group>
        <Group $w={86}>
          <GroupBody><BigBtn w={85} icon={<LinkIc />} lines={["链", "接"]} /></GroupBody>
          <GroupLabel>链接</GroupLabel>
        </Group>
        <Group $w={235}>
          <GroupBody>
            <BigBtn w={62} ml={12} icon={<TextBoxIc />} lines={["文本框"]} caret="below" />
            <BigBtn w={97} icon={<HeaderFooterIc />} lines={["页眉和页脚"]} />
            <Stack $ml={2}>
              <SmallRow><SmallIcon><WordArtIc /></SmallIcon><Caret $ml={5} /></SmallRow>
              <SmallRow><SmallIcon><SignIc /></SmallIcon><Caret $ml={5} /></SmallRow>
              <SmallRow><SmallIcon><ObjectIc /></SmallIcon></SmallRow>
            </Stack>
          </GroupBody>
          <GroupLabel>文本</GroupLabel>
        </Group>
        <Group $w={121}>
          <GroupBody>
            <Stack $ml={14}>
              <SmallRow><SmallIcon><PiIc /></SmallIcon><SmallText $ml={3}>公式</SmallText><Caret $ml={15} /></SmallRow>
              <SmallRow><SmallIcon><OmegaIc /></SmallIcon><SmallText $ml={3}>符号</SmallText></SmallRow>
            </Stack>
          </GroupBody>
          <GroupLabel>符号</GroupLabel>
        </Group>
        <Collapse width="14" height="9" viewBox="0 0 14 9"><path d="m1 8 6-7 6 7" fill="none" stroke="#555" strokeWidth="1.200" /></Collapse>
      </Ribbon>

      <FormulaBar>
        <NameBox>A1<SmallDown c="#666" /></NameBox>
        <Grip><GripDot /><GripDot /><GripDot /></Grip>
        <FxBox>
          <I w={18} h={18}><path d="m1 1 16 16M17 1 1 17" stroke="#bdbdbd" strokeWidth="2.400" /></I>
          <I w={20} h={18}><path d="m2 9 6 7L18 1" fill="none" stroke="#c4c4c4" strokeWidth="3.200" /></I>
          <FxText>fx</FxText>
        </FxBox>
        <FormulaInput>订单编号<I w={16} h={12}><path d="m2 2 6 7 6-7" fill="none" stroke="#b5b5b5" strokeWidth="3" /></I></FormulaInput>
      </FormulaBar>

      <SheetArea>
        <Grid>
          <HeadRow>
            <Corner><CornerMark width="20" height="20" viewBox="0 0 20 20"><path d="M20 0v20H0z" fill="#b5b5b5" /></CornerMark></Corner>
            {LETTERS.slice(1).map((l, i) => <HeadCell key={l} $sel={i < 8}>{l}</HeadCell>)}
          </HeadRow>
          <SheetRow $h={29}>
            <RowHead>1</RowHead>
            {HEAD.map((h, i) => <Cell key={h} $sel $white={i === 0}>{h}</Cell>)}
            {LETTERS.slice(9).map(l => <Cell key={l} />)}
          </SheetRow>
          {DATA.map((r, ri) => (
            <SheetRow $h={28} key={ri}>
              <RowHead>{ri + 2}</RowHead>
              {r.map((v, i) => <Cell key={i} $sel $right={RIGHT.has(i)} $tri={i === 0}>{v}</Cell>)}
              {LETTERS.slice(9).map(l => <Cell key={l} />)}
            </SheetRow>
          ))}
          <Selection />
        </Grid>
        <VScroll>
          <ScrollBtn><Tri width="12" height="7" viewBox="0 0 12 7"><path d="M6 0l6 7H0z" fill="#777" /></Tri></ScrollBtn>
          <VThumb />
          <VTrack />
          <ScrollBtn><Tri width="12" height="7" viewBox="0 0 12 7"><path d="M6 7 0 0h12z" fill="#777" /></Tri></ScrollBtn>
        </VScroll>
      </SheetArea>

      <SheetBar>
        <NavBox>
          <Tri width="7" height="12" viewBox="0 0 7 12"><path d="M7 0v12L0 6z" fill="#c9c9c9" /></Tri>
          <Tri width="7" height="12" viewBox="0 0 7 12"><path d="M0 0v12l7-6z" fill="#c9c9c9" /></Tri>
        </NavBox>
        <SheetTab $w={104}>需求确认</SheetTab>
        <SheetTab $w={105} $active>原始数据</SheetTab>
        <SheetTab $w={91}>Sheet1</SheetTab>
        <TabSep />
        <SheetTab $w={83}>交付物</SheetTab>
        <TabSep />
        <AddSheet width="22" height="22" viewBox="0 0 22 22"><circle cx="11" cy="11" r="10.300" fill="none" stroke="#8a8a8a" strokeWidth="1.200" /><path d="M11 5v12M5 11h12" stroke="#8a8a8a" strokeWidth="1.200" /></AddSheet>
        <HScroll>
          <HDots><GripDot /><GripDot /><GripDot /></HDots>
          <HTrack><HThumb /></HTrack>
          <HBtn><Tri width="7" height="12" viewBox="0 0 7 12"><path d="M0 0v12l7-6z" fill="#777" /></Tri></HBtn>
        </HScroll>
      </SheetBar>

      <StatusBar>
        <StatusText>输入</StatusText>
        <I w={20} h={20}><circle cx="4" cy="4" r="4" fill="#777" /><path d="M6 3h13v17H2V9" fill="#f7f7f7" stroke="#888" /><rect x="6" y="3" width="13" height="4" fill="#888" /><path d="M5 11h2M9 11h2M13 11h3M5 14h2M9 14h2M13 14h3M5 17h2M9 17h2M13 17h3" stroke="#777" /></I>
        <Zoomer><ZoomLine /><I w={12} h={12}><path d="M6 0v12M0 6h12" stroke="#b5b5b5" /></I><ZoomValue>100%</ZoomValue></Zoomer>
      </StatusBar>

      <Taskbar>
        <TaskSlot $w={42}><WinLogo /></TaskSlot>
        <TaskSlot $w={96} $pl={6}><SearchIc /></TaskSlot>
        <TaskSep />
        <TaskSlot $w={75} $ml={16}><ExplorerIc /></TaskSlot>
        <TaskSlot $w={75}><MailIc /></TaskSlot>
        <TaskSlot $w={75}><WeChatIc /></TaskSlot>
        <TaskSlot $w={75}><PinwheelIc /></TaskSlot>
        <TaskSlot $w={75}><IeIc /></TaskSlot>
        <TaskSlot $w={75}><ChromeIc /></TaskSlot>
        <TaskSlot $w={75} $on><ExcelIc /></TaskSlot>
        <TaskSlot $w={42} $ml={1085}><MLogo /></TaskSlot>
        <TaskSlot $w={35} $ml={18}><NotifyIc /></TaskSlot>
      </Taskbar>

      <Dialog>
        <DialogHead>
          <DialogTitle>创建数据透视表</DialogTitle>
          <Help>?</Help>
          <I w={16} h={16}><path d="m.5.5 15 15M15.500.5l-15 15" stroke="#333" /></I>
        </DialogHead>
        <DialogBody>
          <Heading $mt={13}>请选择要分析的数据</Heading>
          <OptRow $mt={14}><Radio $on /><span>选择一个表或区域(<u>S</u>)</span></OptRow>
          <FieldRow $mt={9} $h={36}>
            <FieldLabel $w={103}>表/区域(<u>T</u>):</FieldLabel>
            <RefInput><span>原始数据!$A$1:$H$5107</span></RefInput>
            <RefBtn><ArrowUpIc /></RefBtn>
          </FieldRow>
          <OptRow $mt={9}><Radio /><span>使用外部数据源(<u>U</u>)</span></OptRow>
          <GhostBtn>选择连接(C)...</GhostBtn>
          <Indent $mt={8} $h={23}>连接名称:</Indent>
          <OptRow $mt={10}><Radio /><span>使用此工作簿的数据模型(<u>D</u>)</span></OptRow>
          <Heading $mt={18}>选择放置数据透视表的位置</Heading>
          <OptRow $mt={15}><Radio /><span>新工作表(<u>N</u>)</span></OptRow>
          <OptRow $mt={12}><Radio $on /><span>现有工作表(<u>E</u>)</span></OptRow>
          <FieldRow $mt={9} $h={35}>
            <FieldLabel $w={77}>位置(<u>L</u>):</FieldLabel>
            <RefInput><span>原始数据!$K$5</span></RefInput>
            <RefBtn><ArrowUpIc /></RefBtn>
          </FieldRow>
          <Heading $mt={18}>选择是否想要分析多个表</Heading>
          <OptRow $mt={12}>
            <CheckBox><I w={14} h={12}><path d="m1 6 4 5 8-10" fill="none" stroke="#0078d7" strokeWidth="1.500" /></I></CheckBox>
            <FocusLabel>将此数据添加到数据模型(<u>M</u>)</FocusLabel>
          </OptRow>
          <ButtonRow>
            <DlgBtn $primary>确定</DlgBtn>
            <DlgBtn>取消</DlgBtn>
          </ButtonRow>
          <RedBox />
        </DialogBody>
      </Dialog>
    </Page>
  );
}
